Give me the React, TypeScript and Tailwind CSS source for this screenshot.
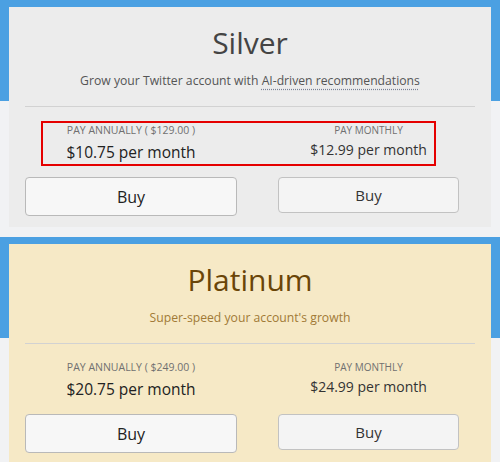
type Plan = {
  name: string;
  tagline: React.ReactNode;
  annual: string;
  annualMonthly: string;
  monthly: string;
  cardBg: string;
  titleColor: string;
  taglineColor: string;
  highlight?: boolean;
};

const plans: Plan[] = [
  {
    name: "Silver",
    tagline: (
      <>
        Grow your Twitter account with{" "}
        <span className="underline decoration-dotted decoration-[#7a8296] underline-offset-4">AI-driven recommendations</span>
      </>
    ),
    annual: "$129.00",
    annualMonthly: "$10.75",
    monthly: "$12.99",
    cardBg: "bg-[#ececec]",
    titleColor: "text-[#444444]",
    taglineColor: "text-[#555555]",
    highlight: true,
  },
  {
    name: "Platinum",
    tagline: "Super-speed your account's growth",
    annual: "$249.00",
    annualMonthly: "$20.75",
    monthly: "$24.99",
    cardBg: "bg-[#f6e9c6]",
    titleColor: "text-[#6a4508]",
    taglineColor: "text-[#a17a36]",
  },
];

function PlanCard({ plan }: { plan: Plan }) {
  return (
    <div className={`relative ${plan.cardBg} px-4 pt-[18px] pb-[11px]`}>
      <h2 className={`text-center text-[30px] leading-[36px] ${plan.titleColor}`}>{plan.name}</h2>
      <p className={`mt-[10px] text-center text-[12.2px] leading-[20px] ${plan.taglineColor}`}>{plan.tagline}</p>
      <div className="mt-[15px] border-t border-[#d2d2d2]" />

      <div className="mt-[16px] flex gap-[41px]">
        <div className="flex w-[212px] flex-col items-center">
          <div className="text-[10.5px] leading-[14px] uppercase text-[#707070]">
            Pay annually ( {plan.annual} )
          </div>
          <div className="mt-[4px] text-[15.5px] leading-[22px] text-[#222222]">{plan.annualMonthly} per month</div>
          <button className="mt-[14px] h-[39px] w-full rounded-[4px] border border-[#b9b9b9] bg-[#f7f7f7] text-[16px] text-[#222222]">
            Buy
          </button>
        </div>
        <div className="flex w-[181px] flex-col items-center">
          <div className="text-[10px] leading-[14px] uppercase text-[#707070]">Pay monthly</div>
          <div className="mt-[3px] text-[14px] leading-[20px] text-[#333333]">{plan.monthly} per month</div>
          <button className="mt-[17px] h-[36px] w-full rounded-[4px] border border-[#c2c2c2] bg-[#f4f4f4] text-[15px] text-[#333333]">
            Buy
          </button>
        </div>
      </div>

      {plan.highlight && (
        <div className="pointer-events-none absolute left-[32px] top-[114px] h-[45px] w-[395px] border-2 border-[#e50000]" />
      )}
    </div>
  );
}

export default function App() {
  return (
    <div className="h-[462px] overflow-hidden bg-[#f1f2f4] font-['Open_Sans',sans-serif]">
      {plans.map((p) => (
        <section
          key={p.name}
          className="bg-[linear-gradient(to_bottom,#4ba0e2_101px,#f1f2f4_101px)] px-[9px] pt-[7px] pb-[10px]"
        >
          <PlanCard plan={p} />
        </section>
      ))}
    </div>
  );
}
